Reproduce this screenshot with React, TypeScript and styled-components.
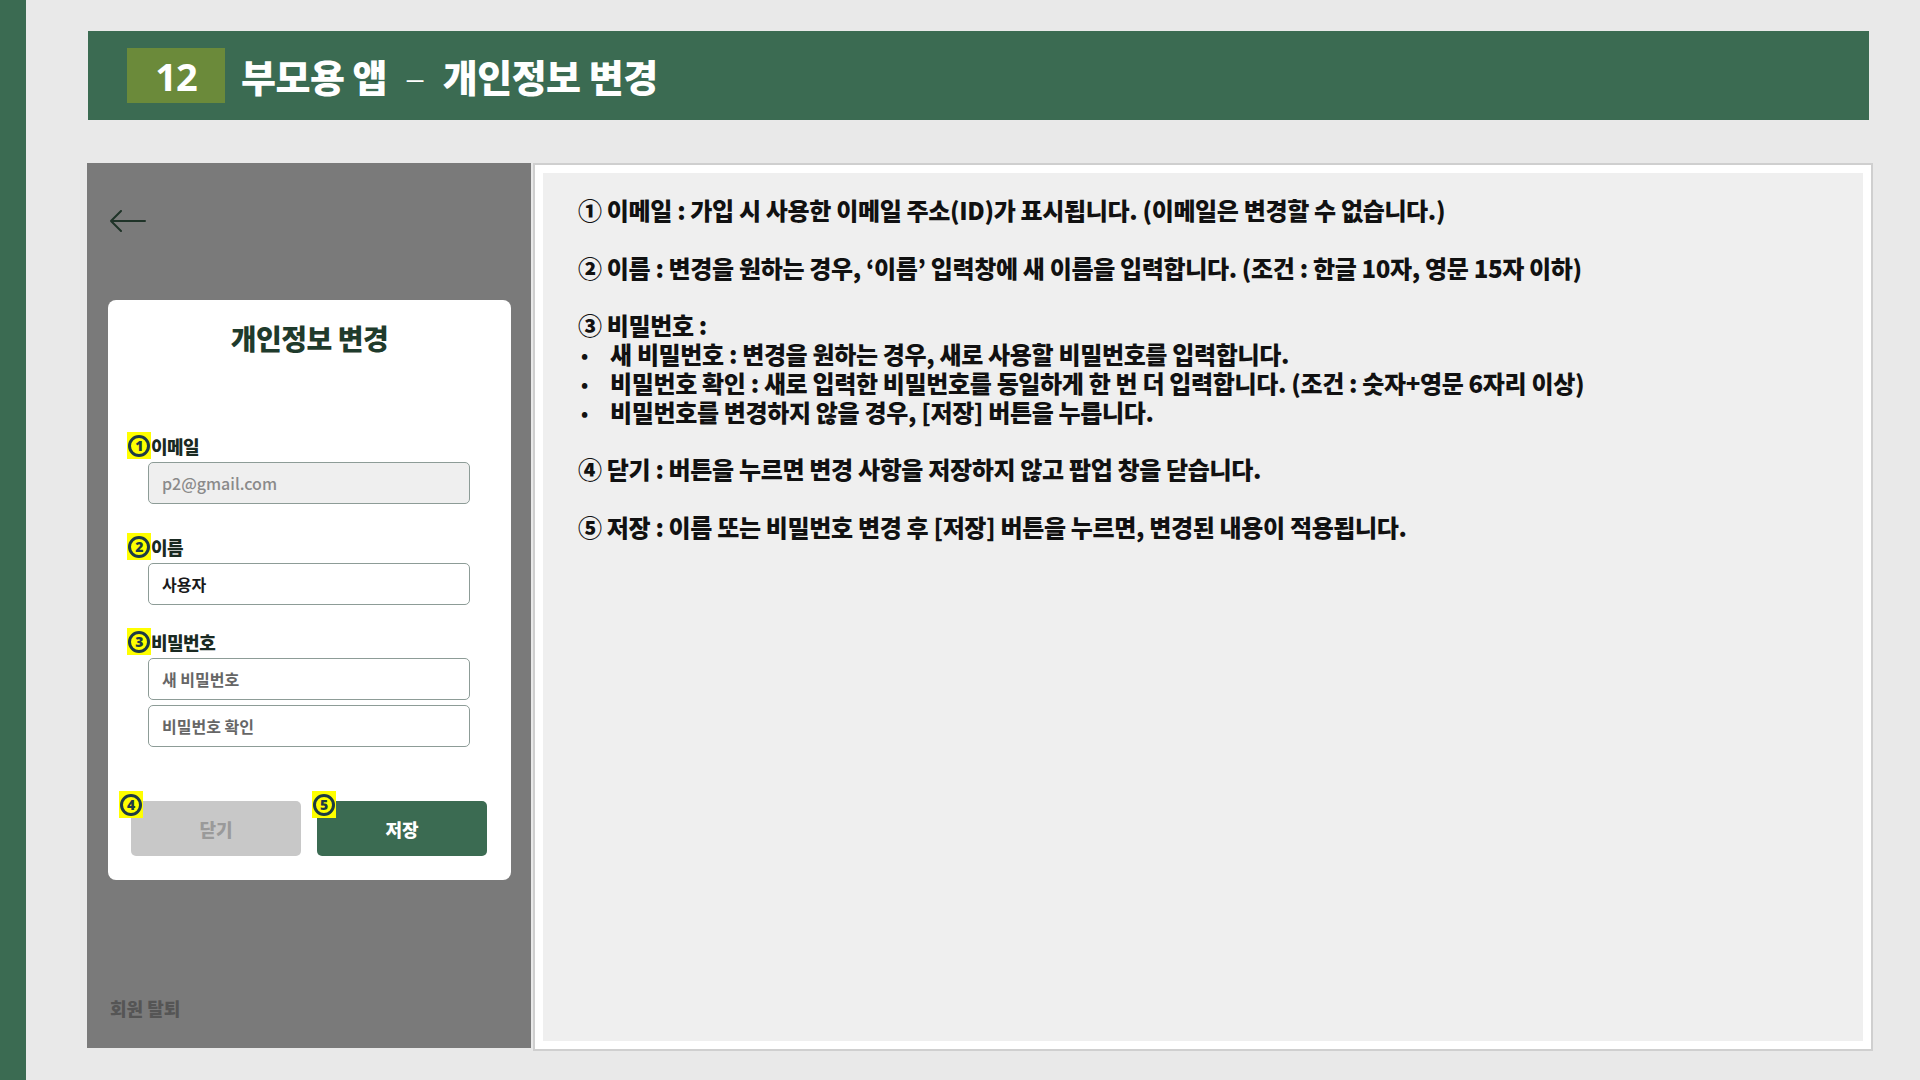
import styled, { createGlobalStyle } from 'styled-components'

const GlobalStyle = createGlobalStyle`
  html, body {
    margin: 0;
    padding: 0;
    background: #e9e9e9;
    font-family: 'Noto Sans CJK KR', 'Noto Sans', sans-serif;
  }
`

const Page = styled.div`
  display: flex;
  width: 1920px;
  height: 1080px;
  overflow: hidden;
  background: #e9e9e9;
`

const SideBar = styled.div`
  width: 26px;
  background: #3b6b52;
`

const Main = styled.div`
  flex: 1;
  padding: 31px 0 0 62px;
`

const Header = styled.header`
  display: flex;
  align-items: center;
  width: 1781px;
  height: 89px;
  padding-left: 39px;
  box-sizing: border-box;
  background: #3b6b52;
`

const Badge = styled.div`
  display: flex;
  align-items: center;
  justify-content: center;
  width: 98px;
  height: 55px;
  background: #6b8a3a;
  color: #fff;
  font-family: 'Noto Sans', sans-serif;
  font-size: 38px;
  font-weight: 700;
  letter-spacing: -1px;
`

const Title = styled.h1`
  margin: 0 0 0 16px;
  color: #fff;
  font-size: 38px;
  font-weight: 900;
  letter-spacing: -0.5px;

  span {
    display: inline-block;
    margin: 0 18px;
    font-weight: 300;
  }
`

const Content = styled.div`
  display: flex;
  margin-top: 43px;
  margin-left: -1px;
`

const Phone = styled.section`
  display: flex;
  flex-direction: column;
  width: 444px;
  height: 885px;
  background: #7a7a7a;
  box-sizing: border-box;
  padding: 39px 0 0 21px;
`

const BackButton = styled.div`
  display: flex;
  align-items: center;
  height: 38px;
  padding-left: 2px;
`

const Card = styled.div`
  display: flex;
  flex-direction: column;
  width: 403px;
  height: 580px;
  margin-top: 60px;
  box-sizing: border-box;
  padding: 18px 0 24px 19px;
  background: #fff;
  border-radius: 8px;
`

const CardTitle = styled.h2`
  margin: 0 0 74px;
  text-align: center;
  padding-right: 19px;
  color: #1f3b2c;
  font-size: 28px;
  font-weight: 900;
  letter-spacing: -0.5px;
`

const Field = styled.div<{ $gap: number }>`
  display: flex;
  flex-direction: column;
  gap: 3px;
  margin-bottom: ${(p) => p.$gap}px;
`

const Label = styled.div`
  display: flex;
  align-items: center;
  height: 27px;
  color: #1a2a22;
  font-size: 18px;
  font-weight: 900;
  letter-spacing: -0.5px;
`

const Num = styled.span`
  display: inline-flex;
  align-items: center;
  justify-content: center;
  width: 24px;
  height: 27px;
  background: #ffff00;
`

const Circle = styled.span`
  display: inline-flex;
  align-items: center;
  justify-content: center;
  width: 22px;
  height: 22px;
  box-sizing: border-box;
  border: 3px solid #1d3b44;
  border-radius: 50%;
  color: #1d3b44;
  font-family: 'Noto Sans', sans-serif;
  font-size: 14px;
  font-weight: 900;
  line-height: 1;
`

const Input = styled.div<{ $disabled?: boolean; $muted?: boolean }>`
  display: flex;
  align-items: center;
  width: 322px;
  height: 42px;
  margin-left: 21px;
  box-sizing: border-box;
  padding-left: 13px;
  border: 1.5px solid #8d9c97;
  border-radius: 5px;
  background: ${(p) => (p.$disabled ? '#efefef' : '#fff')};
  color: ${(p) => (p.$disabled ? '#8a8a8a' : p.$muted ? '#666' : '#1a1a1a')};
  font-size: 16px;
  font-weight: ${(p) => (p.$disabled ? 500 : 700)};
`

const Stack = styled.div`
  display: flex;
  flex-direction: column;
  gap: 5px;
`

const Buttons = styled.div`
  display: flex;
  gap: 16px;
  margin-top: auto;
  padding-left: 4px;
`

const Button = styled.div<{ $primary?: boolean }>`
  position: relative;
  display: flex;
  align-items: center;
  justify-content: center;
  width: 170px;
  height: 55px;
  border-radius: 5px;
  background: ${(p) => (p.$primary ? '#3b6b52' : '#c8c8c8')};
  color: ${(p) => (p.$primary ? '#fff' : '#9a9a9a')};
  font-size: 18px;
  font-weight: 900;
`

const Marker = styled(Num)<{ $left: number }>`
  position: absolute;
  top: -10px;
  left: ${(p) => p.$left}px;
`

const Withdraw = styled.div`
  margin-top: auto;
  margin-bottom: 27px;
  padding-left: 2px;
  color: #555;
  font-size: 18px;
  font-weight: 900;
`

const Notes = styled.section`
  width: 1340px;
  height: 888px;
  margin-left: 2px;
  box-sizing: border-box;
  padding: 8px;
  background: #fff;
  border: 2px solid #cfcfcf;
`

const NotesInner = styled.div`
  height: 100%;
  box-sizing: border-box;
  padding: 23px 0 0 35px;
  background: #efefef;
  color: #111;
  font-size: 24px;
  font-weight: 900;
  line-height: 28.8px;
  letter-spacing: -0.35px;
`

const Para = styled.div`
  margin-bottom: 28.8px;
`

const Bullets = styled.ul`
  margin: 0;
  padding: 0;
  list-style: none;
`

const Bullet = styled.li`
  position: relative;
  padding-left: 32px;

  &::before {
    content: '•';
    position: absolute;
    left: 3px;
    font-size: 18px;
  }
`

function BackArrow() {
  return (
    <svg width="36" height="22" viewBox="0 0 36 22" fill="none">
      <path d="M1 11h34M11 1L1 11l10 10" stroke="#1f3328" strokeWidth="2" strokeLinecap="round" strokeLinejoin="round" />
    </svg>
  )
}

function NumMark({ n }: { n: number }) {
  return (
    <Num>
      <Circle>{n}</Circle>
    </Num>
  )
}

export default function App() {
  return (
    <>
      <GlobalStyle />
      <Page>
        <SideBar />
        <Main>
          <Header>
            <Badge>12</Badge>
            <Title>
              부모용 앱<span>–</span>개인정보 변경
            </Title>
          </Header>

          <Content>
            <Phone>
              <BackButton>
                <BackArrow />
              </BackButton>
              <Card>
                <CardTitle>개인정보 변경</CardTitle>
                <Field $gap={29}>
                  <Label>
                    <NumMark n={1} />이메일
                  </Label>
                  <Input $disabled>p2@gmail.com</Input>
                </Field>
                <Field $gap={23}>
                  <Label>
                    <NumMark n={2} />이름
                  </Label>
                  <Input>사용자</Input>
                </Field>
                <Field $gap={0}>
                  <Label>
                    <NumMark n={3} />비밀번호
                  </Label>
                  <Stack>
                    <Input $muted>새 비밀번호</Input>
                    <Input $muted>비밀번호 확인</Input>
                  </Stack>
                </Field>
                <Buttons>
                  <Button>
                    <Marker $left={-12}>
                      <Circle>4</Circle>
                    </Marker>
                    닫기
                  </Button>
                  <Button $primary>
                    <Marker $left={-5}>
                      <Circle>5</Circle>
                    </Marker>
                    저장
                  </Button>
                </Buttons>
              </Card>
              <Withdraw>회원 탈퇴</Withdraw>
            </Phone>

            <Notes>
              <NotesInner>
                <Para>① 이메일 : 가입 시 사용한 이메일 주소(ID)가 표시됩니다. (이메일은 변경할 수 없습니다.)</Para>
                <Para>② 이름 : 변경을 원하는 경우, ‘이름’ 입력창에 새 이름을 입력합니다. (조건 : 한글 10자, 영문 15자 이하)</Para>
                <Para>
                  ③ 비밀번호 :
                  <Bullets>
                    <Bullet>새 비밀번호 : 변경을 원하는 경우, 새로 사용할 비밀번호를 입력합니다.</Bullet>
                    <Bullet>비밀번호 확인 : 새로 입력한 비밀번호를 동일하게 한 번 더 입력합니다. (조건 : 숫자+영문 6자리 이상)</Bullet>
                    <Bullet>비밀번호를 변경하지 않을 경우, [저장] 버튼을 누릅니다.</Bullet>
                  </Bullets>
                </Para>
                <Para>④ 닫기 : 버튼을 누르면 변경 사항을 저장하지 않고 팝업 창을 닫습니다.</Para>
                <Para>⑤ 저장 : 이름 또는 비밀번호 변경 후 [저장] 버튼을 누르면, 변경된 내용이 적용됩니다.</Para>
              </NotesInner>
            </Notes>
          </Content>
        </Main>
      </Page>
    </>
  )
}
